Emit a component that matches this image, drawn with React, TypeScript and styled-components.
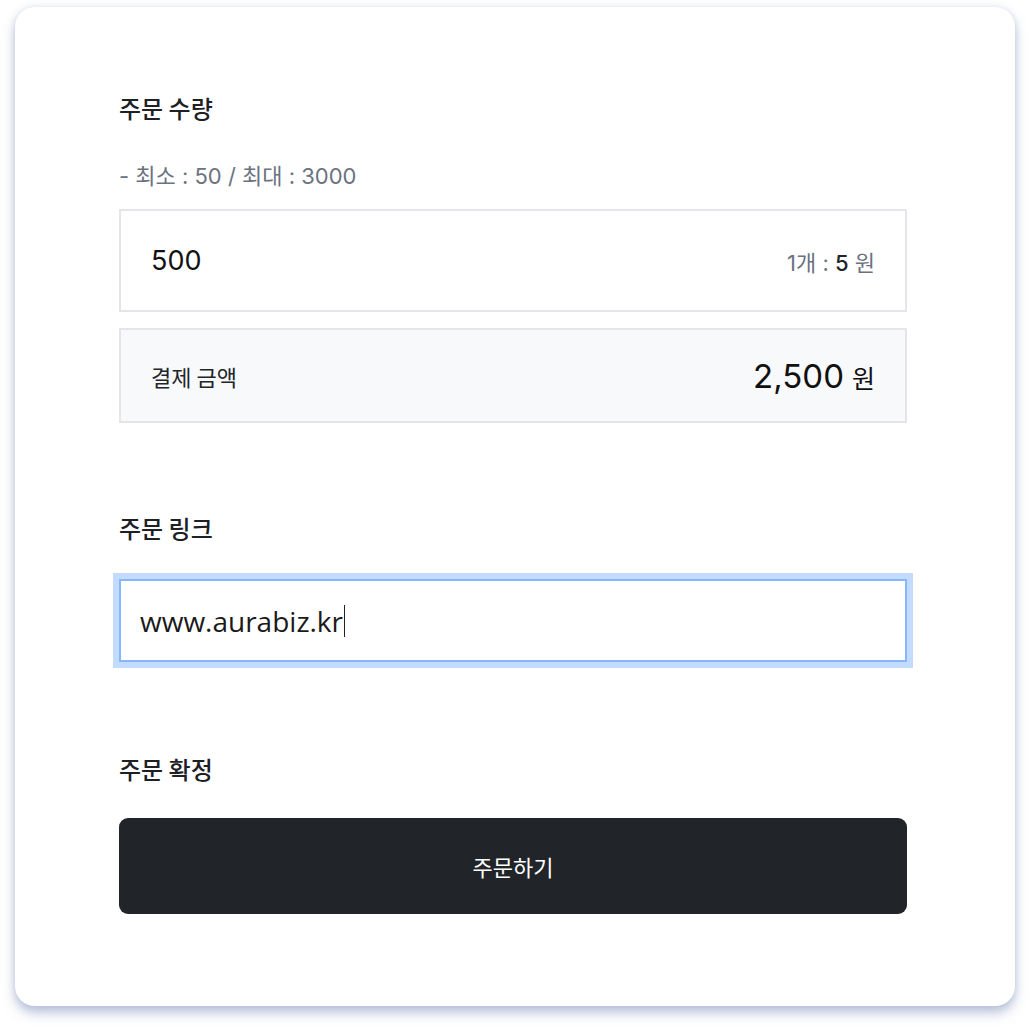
import React from 'react'
import styled, { createGlobalStyle } from 'styled-components'

const GlobalStyle = createGlobalStyle`
	html, body {
		margin: 0;
		padding: 0;
		background: #ffffff;
	}
	body {
		font-family: Inter, 'Noto Sans CJK KR', sans-serif;
		color: #212529;
	}
`

const Page = styled.div`
	padding: 7px 15px 24px;
`

const Card = styled.div`
	width: 1000px;
	height: 999px;
	box-sizing: border-box;
	padding: 85px 0 0 104px;
	background: #ffffff;
	border-radius: 20px;
	box-shadow: 0 7px 12px rgba(120, 140, 185, 0.5), 0 0 6px rgba(150, 165, 200, 0.25);
`

const Content = styled.div`
	width: 788px;
	display: flex;
	flex-direction: column;
`

const Label = styled.div<{ top?: number }>`
	margin-top: ${p => p.top ?? 0}px;
	font-size: 24px;
	line-height: 32px;
	font-weight: 500;
	font-family: 'Noto Sans CJK KR', sans-serif;
	color: #1d2024;
`

const Hint = styled.div`
	margin-top: 37px;
	font-size: 22px;
	line-height: 30px;
	color: #6b7280;
	font-family: Inter, 'Noto Sans CJK KR', sans-serif;
`

const Box = styled.div<{ h: number; shaded?: boolean; top: number }>`
	margin-top: ${p => p.top}px;
	height: ${p => p.h}px;
	box-sizing: border-box;
	border: 2px solid #e3e5e8;
	background: ${p => (p.shaded ? '#f8f9fa' : '#ffffff')};
	display: flex;
	align-items: center;
	justify-content: space-between;
	padding: 0 30px 0 30px;
`

const Qty = styled.span`
	font-size: 27px;
	color: #111111;
	font-family: Inter, sans-serif;
`

const Unit = styled.span`
	font-size: 22px;
	color: #6b7280;
	font-family: Inter, 'Noto Sans CJK KR', sans-serif;
	b {
		font-weight: 500;
		color: #212529;
	}
`

const PayLabel = styled.span`
	font-size: 22px;
	font-family: 'Noto Sans CJK KR', sans-serif;
	color: #212529;
`

const Amount = styled.span`
	font-size: 33px;
	font-family: Inter, sans-serif;
	color: #111111;
	small {
		font-size: 25px;
		margin-left: 8px;
		font-family: 'Noto Sans CJK KR', sans-serif;
	}
`

const LinkField = styled.div`
	margin-top: 35px;
	height: 83px;
	box-sizing: border-box;
	border: 2px solid #86b7fe;
	box-shadow: 0 0 0 6px #c3dbfe;
	background: #ffffff;
	display: flex;
	align-items: center;
	padding: 0 19px;
	font-size: 28px;
	font-family: 'Open Sans', sans-serif;
	color: #1a1a1a;
`

const Caret = styled.span`
	display: inline-block;
	width: 1px;
	height: 32px;
	margin-left: 1px;
	background: #222222;
`

const Submit = styled.button`
	margin-top: 33px;
	height: 96px;
	border: none;
	border-radius: 9px;
	background: #212529;
	color: #ffffff;
	font-size: 22px;
	font-family: 'Noto Sans CJK KR', sans-serif;
	cursor: pointer;
`

export default function App() {
	return (
		<Page>
			<GlobalStyle />
			<Card>
				<Content>
					<Label>주문 수량</Label>
					<Hint>- 최소 : 50 / 최대 : 3000</Hint>
					<Box h={103} top={18}>
						<Qty>500</Qty>
						<Unit>
							1개 : <b>5</b> 원
						</Unit>
					</Box>
					<Box h={95} top={16} shaded>
						<PayLabel>결제 금액</PayLabel>
						<Amount>
							2,500<small>원</small>
						</Amount>
					</Box>

					<Label top={89}>주문 링크</Label>
					<LinkField>
						www.aurabiz.kr
						<Caret />
					</LinkField>

					<Label top={91}>주문 확정</Label>
					<Submit type="button">주문하기</Submit>
				</Content>
			</Card>
		</Page>
	)
}
